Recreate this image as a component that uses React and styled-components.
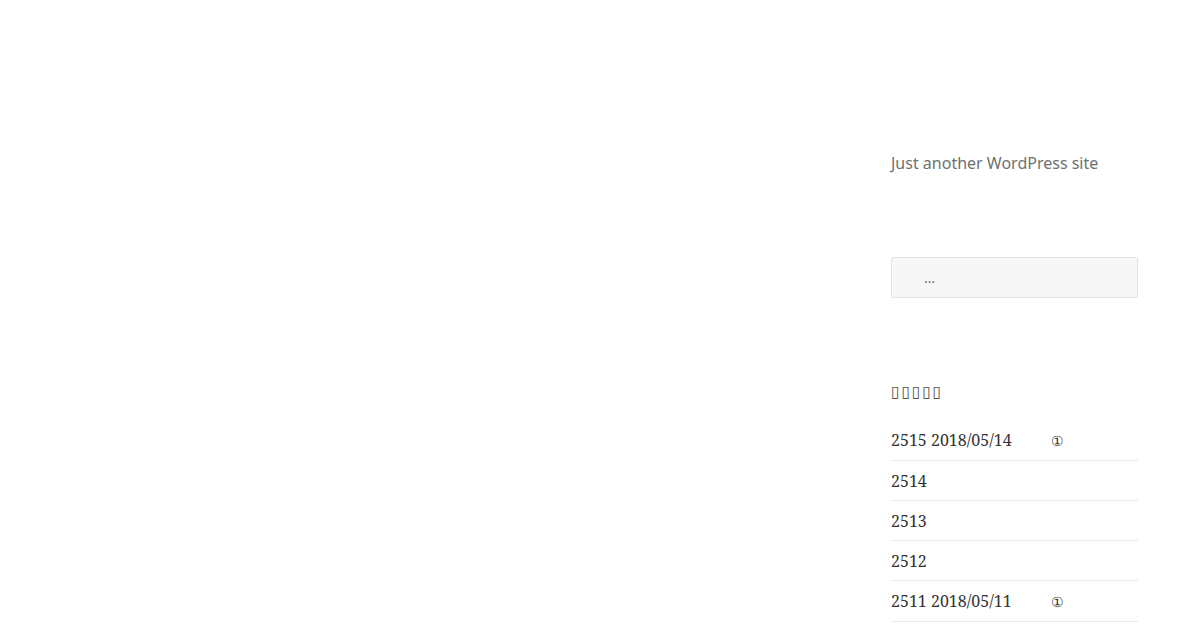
import React from "react";
import styled, { createGlobalStyle } from "styled-components";

const GlobalStyle = createGlobalStyle`
  body {
    margin: 0;
    background: #fff;
  }
`;

const posts = [
  { id: 2515, date: "2018/05/14", mark: true },
  { id: 2514 },
  { id: 2513 },
  { id: 2512 },
  { id: 2511, date: "2018/05/11", mark: true },
];

export default function App() {
  return (
    <>
      <GlobalStyle />
      <Page>
        <Main />
        <Sidebar>
          <Tagline>Just another WordPress site</Tagline>
          <SearchField placeholder="…" />
          <WidgetTitle>▯▯▯▯▯</WidgetTitle>
          <PostList>
            {posts.map((p) => (
              <PostItem key={p.id}>
                {p.id}
                {p.date && ` ${p.date}`}
                {p.mark && <Mark>①</Mark>}
              </PostItem>
            ))}
          </PostList>
        </Sidebar>
      </Page>
    </>
  );
}

const Page = styled.div`
  display: flex;
  width: 1200px;
  height: 630px;
  overflow: hidden;
`;

const Main = styled.div`
  flex: 1;
`;

const Sidebar = styled.aside`
  width: 247px;
  margin-right: 62px;
  display: flex;
  flex-direction: column;
  padding-top: 151px;
`;

const Tagline = styled.p`
  margin: 0;
  font-family: "Noto Sans", sans-serif;
  font-size: 16px;
  line-height: 24px;
  color: #707070;
`;

const SearchField = styled.input`
  margin-top: 82px;
  box-sizing: border-box;
  width: 100%;
  height: 41px;
  padding: 0 32px;
  background: #f7f7f7;
  border: 1px solid #e3e3e3;
  border-radius: 2px;
  font-family: "Noto Sans", sans-serif;
  font-size: 14px;
  outline: none;
  &::placeholder {
    color: #707070;
  }
`;

const WidgetTitle = styled.h2`
  margin: 86px 0 0;
  font-family: "DejaVu Sans", sans-serif;
  font-size: 16px;
  line-height: 16px;
  font-weight: normal;
  letter-spacing: 1.6px;
  color: #555;
`;

const PostList = styled.ul`
  list-style: none;
  margin: 20px 0 0;
  padding: 0;
`;

const PostItem = styled.li`
  font-family: "Noto Serif", "Liberation Serif", serif;
  font-size: 16px;
  line-height: 24px;
  padding: 8px 0 7px;
  color: #333;
  border-bottom: 1px solid #eaeaea;
`;

const Mark = styled.span`
  margin-left: 39px;
  font-size: 14px;
`;
